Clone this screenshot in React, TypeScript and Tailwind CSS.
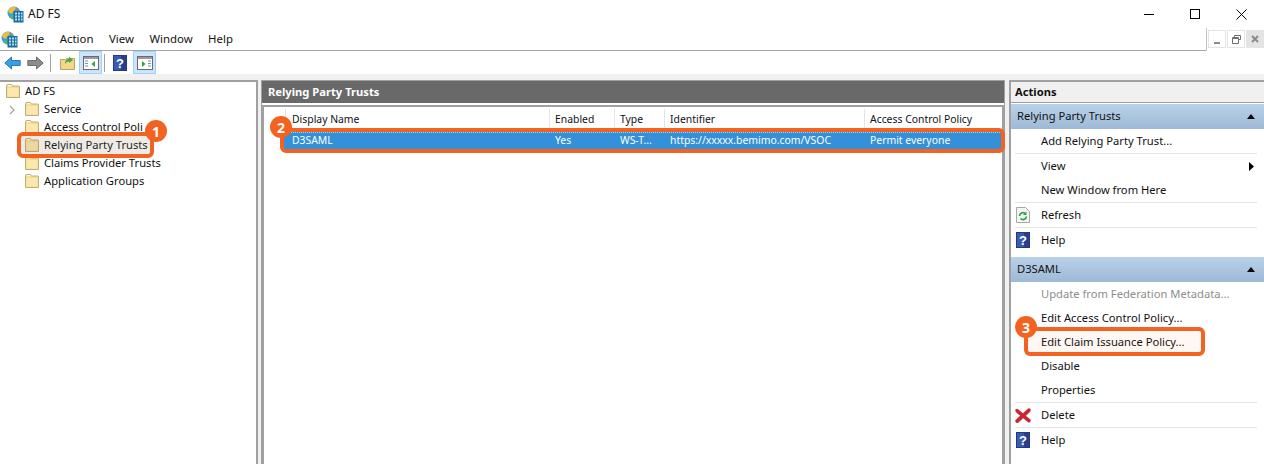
import { FC, ReactNode } from "react";

const Folder: FC = () => (
  <svg width="16" height="16" viewBox="0 0 16 16" className="shrink-0">
    <path d="M1.5 14.500V2.500a1 1 0 0 1 1-1h4l1 1.500h6a1 1 0 0 1 1 1v10.500z" fill="#f8dc8e" stroke="#bfae7a" />
    <path d="M2.500 5h11v8.500h-11z" fill="#fbe8ae" />
    <path d="M3 2.700h3.500" stroke="#fff" />
  </svg>
);

const AppIcon: FC<{ size?: number }> = ({ size = 17 }) => (
  <svg width={size} height={size} viewBox="0 0 17 17" className="shrink-0">
    <circle cx="7" cy="7" r="6.500" fill="#35a2de" />
    <path d="M1 5C2.500 1.500 6 0 8.500 1c1 2.500-2 3.500-2.500 5.500S2.500 8 1 5z" fill="#f3bb3c" />
    <path d="M2.500 10.500l3-1.500 1 5z" fill="#5fb548" />
    <path d="M9 1.500l3 1.500-2 2z" fill="#e4733a" />
    <rect x="6.500" y="5" width="10" height="11.500" fill="#1c6d9e" />
    <path d="M8 6.500h2v2H8zM11 6.500h2v2h-2zM14 6.500h1.500v2H14zM8 9.500h2v2H8zM11 9.500h2v2h-2zM14 9.500h1.500v2H14zM8 12.500h2v2H8zM11 12.500h2v2h-2zM14 12.500h1.500v2H14z" fill="#aee0f5" />
  </svg>
);

const HelpIcon: FC = () => (
  <svg width="14" height="16" viewBox="0 0 14 16" className="shrink-0">
    <rect x=".5" y=".5" width="13" height="15" fill="#3a5cb0" stroke="#25397f" />
    <rect x="8" y="1" width="5" height="14" fill="#273f8a" />
    <text x="7" y="13" textAnchor="middle" fontSize="13" fontWeight="700" fill="#fff" fontFamily="Liberation Sans, sans-serif">?</text>
  </svg>
);

const PaneIcon: FC<{ flip?: boolean }> = ({ flip }) => (
  <svg width="16" height="14" viewBox="0 0 16 14">
    <rect x=".5" y=".5" width="15" height="13" fill="#fff" stroke="#6b6b6b" />
    <rect x="1" y="1" width="14" height="2" fill="#9a9a9a" />
    {flip ? (
      <>
        <path d="M11 5h3M11 7.500h3M11 10h3" stroke="#6a8fc0" />
        <path d="M5 5l3.500 3L5 11z" fill="#2fa52f" />
      </>
    ) : (
      <>
        <path d="M2 5h3M2 7.500h3M2 10h3" stroke="#6a8fc0" />
        <path d="M12 5L8.500 8l3.500 3z" fill="#2fa52f" />
      </>
    )}
  </svg>
);

const Arrow: FC<{ fill: string; stroke: string; flip?: boolean }> = ({ fill, stroke, flip }) => (
  <svg width="17" height="14" viewBox="0 0 17 14" className={`shrink-0 ${flip ? "-scale-x-100" : ""}`}>
    <path d="M.8 7L7.500 1v3.500h8.700v5H7.500V13z" fill={fill} stroke={stroke} />
  </svg>
);

const Collapse = () => (
  <svg width="8" height="5" viewBox="0 0 8 5">
    <path d="M0 5L4 0l4 5z" fill="#000" />
  </svg>
);

const Group: FC<{ label: string }> = ({ label }) => (
  <div className="h-[25px] flex items-center justify-between pl-[6px] pr-[9px] bg-gradient-to-b from-[#bad2e9] to-[#9db9d6]">
    <span>{label}</span>
    <Collapse />
  </div>
);

const Action: FC<{ label: string; icon?: ReactNode; line?: boolean; muted?: boolean; more?: boolean }> = ({
  label,
  icon,
  line,
  muted,
  more,
}) => (
  <div className={`flex items-center ml-[4px] mr-[7px] ${line ? "h-[25px] border-b border-[#e4e4e4]" : "h-[24px]"}`}>
    <span className="w-[16px] flex justify-center shrink-0">{icon}</span>
    <span className={`ml-[10px] flex-1 ${muted ? "text-[#8d8d8d]" : ""}`}>{label}</span>
    {more && (
      <svg width="5" height="9" viewBox="0 0 5 9" className="mr-[3px]">
        <path d="M0 0l5 4.500L0 9z" fill="#000" />
      </svg>
    )}
  </div>
);

const RefreshIcon = () => (
  <svg width="14" height="16" viewBox="0 0 14 16">
    <path d="M.5.5h9l4 4v11H.5z" fill="#f4f4f4" stroke="#a8a8a8" />
    <path d="M3.500 9a3.500 3.500 0 0 1 6.200-2M10.500 9.500A3.500 3.500 0 0 1 4.500 11.500" fill="none" stroke="#2fa84a" strokeWidth="1.800" />
    <path d="M10.500 4.500v3.500H7z" fill="#2fa84a" />
  </svg>
);

const DeleteIcon = () => (
  <svg width="16" height="15" viewBox="0 0 16 15">
    <path d="M2.500 4L14 13.500M14 3.500L2.500 14" stroke="#9a9a9a" strokeWidth="2.500" strokeLinecap="round" />
    <path d="M2 2.500L14 12.500M14 2L2 13" stroke="#d0232c" strokeWidth="3.400" strokeLinecap="round" />
  </svg>
);

const Badge: FC<{ n: number; className: string }> = ({ n, className }) => (
  <div className={`absolute w-[22px] h-[22px] rounded-full bg-[#f26322] text-white font-bold text-[14px] flex items-center justify-center ${className}`}>
    {n}
  </div>
);

const Tree: FC<{ label: string; chevron?: boolean }> = ({ label, chevron }) => (
  <div className="h-[18px] flex items-center pl-[24px] relative">
    {chevron && (
      <svg width="6" height="10" viewBox="0 0 6 10" className="absolute left-[9px] top-[5px]">
        <path d="M1 1l4 4-4 4" fill="none" stroke="#a6a6a6" strokeWidth="1.300" />
      </svg>
    )}
    <Folder />
    <span className="ml-[4px] whitespace-nowrap">{label}</span>
  </div>
);

const cols = [
  { name: "Display Name", value: "D3SAML", w: "w-[264px]" },
  { name: "Enabled", value: "Yes", w: "w-[65px]" },
  { name: "Type", value: "WS-T...", w: "w-[50px]" },
  { name: "Identifier", value: "https://xxxxx.bemimo.com/VSOC", w: "w-[200px]" },
  { name: "Access Control Policy", value: "Permit everyone", w: "w-[136px]" },
];

export default function App() {
  return (
    <div className="relative w-[1264px] h-[464px] overflow-hidden bg-white text-[11.2px] text-[#111] font-['Noto_Sans',sans-serif]">
      {/* title bar */}
      <div className="h-[28px] flex items-center pl-[7px]">
        <AppIcon />
        <span className="ml-[4px] text-[12px]">AD FS</span>
        <div className="ml-auto flex items-center">
          <div className="w-[46px] flex justify-center"><div className="w-[10px] h-px bg-black" /></div>
          <div className="w-[46px] flex justify-center"><div className="w-[10px] h-[10px] border border-black" /></div>
          <div className="w-[46px] flex justify-center">
            <svg width="11" height="11" viewBox="0 0 11 11"><path d="M.5.5l10 10M10.500.5l-10 10" stroke="#000" /></svg>
          </div>
        </div>
      </div>
      {/* menu */}
      <div className="h-[23px] flex items-center border-b border-[#a6a6a6]">
        <div className="ml-[1px]"><AppIcon /></div>
        <div className="flex ml-[8px] gap-[15.500px] text-[11.400px]">
          <span>File</span>
          <span>Action</span>
          <span>View</span>
          <span>Window</span>
          <span>Help</span>
        </div>
        <div className="ml-auto h-[23px] w-[58px] flex items-start gap-[1px] bg-white border-l border-[#c0c0c0] pl-[1px] pt-[2px] -mb-px relative z-10">
          <div className="w-[18px] h-[18px] border border-[#e4e4e4] flex items-end justify-center pb-[3px]"><div className="w-[6px] h-[2px] bg-[#8a8a8a]" /></div>
          <div className="w-[18px] h-[18px] border border-[#e4e4e4] flex items-center justify-center">
            <svg width="9" height="9" viewBox="0 0 9 9"><path d="M2.500 2.500V.5h6v4H6.500M.5 2.500h6v6h-6zM.5 3.500h6" fill="none" stroke="#707070" /></svg>
          </div>
          <div className="w-[18px] h-[18px] bg-[#e4e4e4] flex items-center justify-center">
            <svg width="8" height="8" viewBox="0 0 8 8"><path d="M1 1l6 6M7 1L1 7" stroke="#8a8a8a" strokeWidth="2" /></svg>
          </div>
        </div>
      </div>
      {/* toolbar */}
      <div className="h-[23px] flex items-center pl-[4px]">
        <Arrow fill="#3aa0e6" stroke="#2a78b8" />
        <div className="ml-[6px]"><Arrow fill="#8c8c8c" stroke="#6c6c6c" flip /></div>
        <div className="w-px h-[18px] bg-[#a0a0a0] ml-[6px]" />
        <div className="w-[23px] h-[22px] flex items-center justify-center ml-[5px]">
          <svg width="15" height="15" viewBox="0 0 15 15">
            <path d="M.5 14.500v-10h5l1-1h8v11z" fill="#f5d78a" stroke="#b9a468" />
            <path d="M5 9c0-4 2-5 4-5V1.500L13 5 9 8V6.500C7 6.500 6 7.500 5 9z" fill="#4ea64a" />
          </svg>
        </div>
        <div className="w-[23px] h-[23px] bg-[#cce4f7] border border-[#99d1ff] flex items-center justify-center"><PaneIcon /></div>
        <div className="w-px h-[18px] bg-[#a0a0a0] ml-[2px]" />
        <div className="w-[22px] flex justify-center ml-[4px]"><HelpIcon /></div>
        <div className="w-[23px] h-[23px] bg-[#cce4f7] border border-[#99d1ff] flex items-center justify-center ml-[2px]"><PaneIcon flip /></div>
      </div>
      {/* panels */}
      <div className="h-[390px] bg-[#f0f0f0] pt-[6px] flex">
        <div className="w-[258px] h-full bg-white border-t-2 border-r-2 border-[#a0a0a0] shrink-0">
          <div className="h-[18px] flex items-center pl-[5px]">
            <Folder />
            <span className="ml-[4px]">AD FS</span>
          </div>
          <Tree label="Service" chevron />
          <Tree label="Access Control Poli" />
          <Tree label="Relying Party Trusts" />
          <Tree label="Claims Provider Trusts" />
          <Tree label="Application Groups" />
        </div>
        <div className="w-[3px] shrink-0" />
        <div className="w-[744px] h-full bg-white border-t border-x border-[#a0a0a0] shrink-0">
          <div className="h-[22px] bg-[#696969] text-white font-bold flex items-center pl-[6px]">Relying Party Trusts</div>
          <div className="h-full mt-[2px] border-t-2 border-x-2 border-[#a0a0a0] pt-[2px] text-[10.400px]">
            <div className="h-[22px] flex pl-[21px] items-center">
              {cols.map((c) => (
                <div key={c.name} className={`${c.w} h-full flex items-center pl-[5px] first:pl-[6px] border-l border-[#e4e4e4] whitespace-nowrap`}>
                  {c.name}
                </div>
              ))}
            </div>
            <div className="h-[18px] flex ml-[18px] pl-[3px] items-center bg-[#3390d9] text-white mt-[1px] border border-dotted border-white/60">
              {cols.map((c) => (
                <div key={c.name} className={`${c.w} pl-[5px] first:pl-[6px] whitespace-nowrap`}>{c.value}</div>
              ))}
            </div>
          </div>
        </div>
        <div className="w-[4px] shrink-0" />
        <div className="flex-1 h-full bg-white border-t-2 border-l-2 border-[#a0a0a0]">
          <div className="h-[21px] bg-[#f0f0f0] border-b border-[#a0a0a0] font-bold flex items-center pl-[4px] mb-px">Actions</div>
          <Group label="Relying Party Trusts" />
          <Action label="Add Relying Party Trust..." line />
          <Action label="View" more />
          <Action label="New Window from Here" line />
          <Action label="Refresh" icon={<RefreshIcon />} line />
          <div className="mb-[5px]"><Action label="Help" icon={<HelpIcon />} /></div>
          <Group label="D3SAML" />
          <Action label="Update from Federation Metadata..." muted />
          <Action label="Edit Access Control Policy..." />
          <Action label="Edit Claim Issuance Policy..." />
          <Action label="Disable" />
          <Action label="Properties" line />
          <Action label="Delete" icon={<DeleteIcon />} line />
          <Action label="Help" icon={<HelpIcon />} />
        </div>
      </div>
      {/* annotations */}
      <div className="absolute left-[17px] top-[132px] w-[137px] h-[26px] border-[4px] border-[#f26322] rounded-[6px] bg-[#8a7a60]/15" />
      <Badge n={1} className="left-[145px] top-[120px]" />
      <div className="absolute left-[280px] top-[128px] w-[725px] h-[25px] border-[4px] border-[#f26322] rounded-[6px]" />
      <Badge n={2} className="left-[270px] top-[116px]" />
      <div className="absolute left-[1024px] top-[327px] w-[181px] h-[29px] border-[4px] border-[#f26322] rounded-[6px] bg-[#f26322]/5" />
      <Badge n={3} className="left-[1015px] top-[316px]" />
    </div>
  );
}
